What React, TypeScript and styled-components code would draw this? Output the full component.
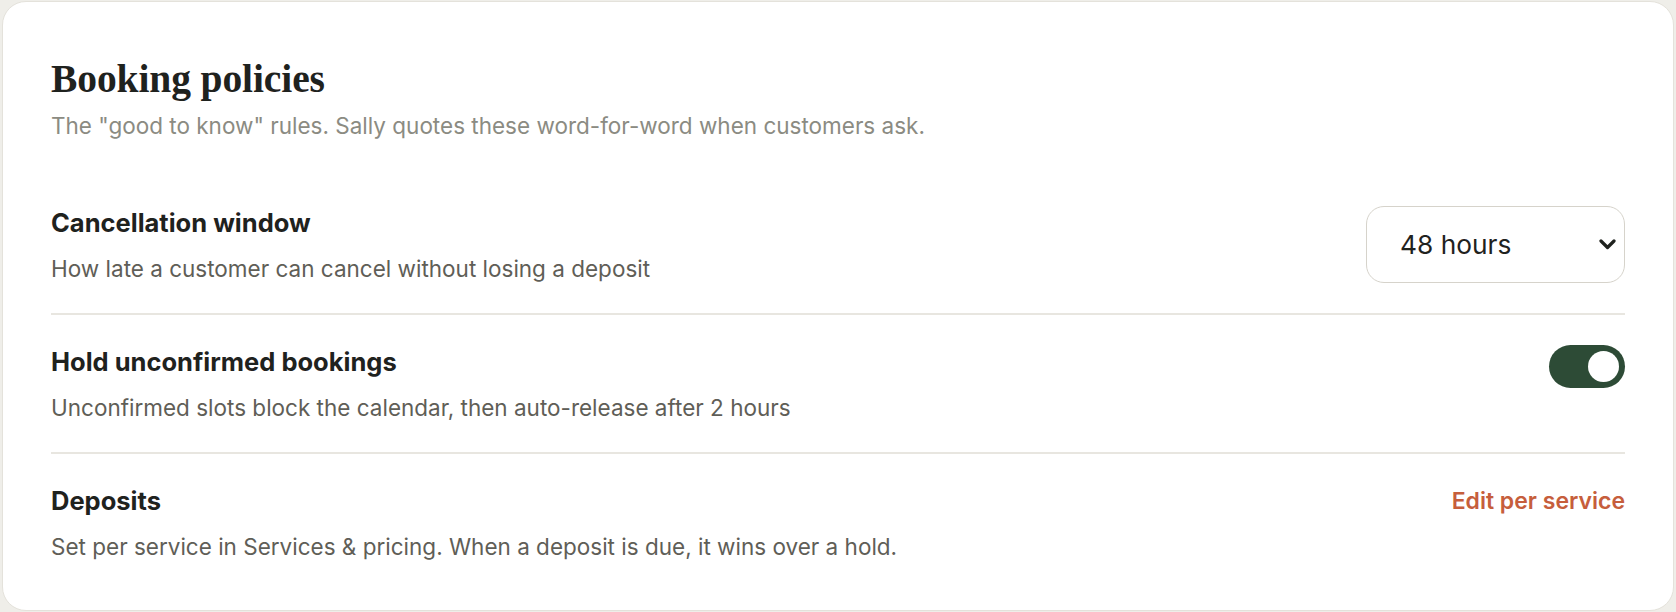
import * as React from 'react'
import styled, { createGlobalStyle } from 'styled-components'

const GlobalStyle = createGlobalStyle`
  html, body {
    margin: 0;
    padding: 0;
    background: #efeee9;
  }
  * {
    box-sizing: border-box;
  }
`

const Page = styled.div`
  padding: 1px 2px 1px 2px;
  font-family: Inter, 'Noto Sans', sans-serif;
`

const Card = styled.section`
  background: #ffffff;
  border: 1.5px solid #e4e2db;
  border-radius: 24px;
  padding: 53px 48px 19px 48px;
`

const Heading = styled.h2`
  margin: 0;
  font-family: 'Liberation Serif', serif;
  font-weight: 700;
  font-size: 39.5px;
  line-height: 48px;
  color: #1f221e;
  letter-spacing: -0.1px;
`

const Subtitle = styled.p`
  margin: 7px 0 0 0;
  font-size: 22.5px;
  line-height: 32px;
  color: #8b8b82;
`

const List = styled.div`
  margin-top: 64px;
  display: flex;
  flex-direction: column;
`

const Row = styled.div<{ $last?: boolean }>`
  display: flex;
  justify-content: space-between;
  align-items: flex-start;
  gap: 32px;
  padding: 30px 0 28px 0;
  border-bottom: ${({ $last }) => ($last ? 'none' : '2px solid #e8e6e0')};
  &:first-child {
    padding-top: 0;
  }
`

const Text = styled.div`
  display: flex;
  flex-direction: column;
  gap: 13px;
`

const Title = styled.div`
  font-size: 25.5px;
  line-height: 34px;
  font-weight: 700;
  color: #1f221e;
`

const Description = styled.div`
  font-size: 22.5px;
  line-height: 32px;
  color: #5f5e57;
`

const SelectBox = styled.div`
  width: 259px;
  height: 77px;
  border: 1.5px solid #d6d3cb;
  border-radius: 18px;
  display: flex;
  align-items: center;
  padding: 0 8px 0 33px;
  flex-shrink: 0;
`

const SelectValue = styled.span`
  flex: 1;
  font-size: 26.3px;
  color: #1f221e;
`

const Toggle = styled.div<{ $on: boolean }>`
  width: 76px;
  height: 43px;
  border-radius: 22px;
  background: ${({ $on }) => ($on ? '#2d4b36' : '#d6d3cb')};
  display: flex;
  align-items: center;
  justify-content: ${({ $on }) => ($on ? 'flex-end' : 'flex-start')};
  padding: 0 6px;
  flex-shrink: 0;
`

const Knob = styled.div`
  width: 31px;
  height: 31px;
  border-radius: 50%;
  background: #ffffff;
`

const LinkButton = styled.a`
  font-size: 23px;
  line-height: 34px;
  font-weight: 600;
  color: #c65e3c;
  text-decoration: none;
  white-space: nowrap;
`

const Chevron = () => (
  <svg width="17" height="11" viewBox="0 0 17 11" fill="none">
    <path d="M2 2l6.5 6.5L15 2" stroke="#1f221e" strokeWidth="3.2" strokeLinecap="round" strokeLinejoin="round" />
  </svg>
)

export default function App() {
  return (
    <Page>
      <GlobalStyle />
      <Card>
        <Heading>Booking policies</Heading>
        <Subtitle>The "good to know" rules. Sally quotes these word-for-word when customers ask.</Subtitle>
        <List>
          <Row>
            <Text>
              <Title>Cancellation window</Title>
              <Description>How late a customer can cancel without losing a deposit</Description>
            </Text>
            <SelectBox>
              <SelectValue>48 hours</SelectValue>
              <Chevron />
            </SelectBox>
          </Row>
          <Row>
            <Text>
              <Title>Hold unconfirmed bookings</Title>
              <Description>Unconfirmed slots block the calendar, then auto-release after 2 hours</Description>
            </Text>
            <Toggle $on>
              <Knob />
            </Toggle>
          </Row>
          <Row $last>
            <Text>
              <Title>Deposits</Title>
              <Description>Set per service in Services &amp; pricing. When a deposit is due, it wins over a hold.</Description>
            </Text>
            <LinkButton>Edit per service</LinkButton>
          </Row>
        </List>
      </Card>
    </Page>
  )
}
